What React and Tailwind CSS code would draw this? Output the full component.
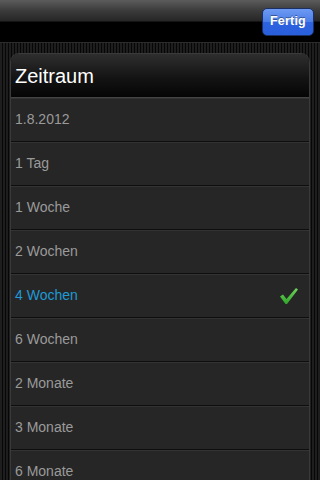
import React from "react";

const rows = [
  { label: "1.8.2012" },
  { label: "1 Tag" },
  { label: "1 Woche" },
  { label: "2 Wochen" },
  { label: "4 Wochen", selected: true },
  { label: "6 Wochen" },
  { label: "2 Monate" },
  { label: "3 Monate" },
  { label: "6 Monate" },
];

function Check() {
  return (
    <svg width="20" height="18" viewBox="0 0 20 18">
      <defs>
        <linearGradient id="cg" x1="0" y1="0" x2="0" y2="1">
          <stop offset="0" stopColor="#6fd35a" />
          <stop offset="1" stopColor="#2fa52a" />
        </linearGradient>
      </defs>
      <path
        d="M1 9.5 L4 7.5 L7.5 12 L17 1 L19 2.5 L8 17 L6.5 17 Z"
        fill="url(#cg)"
      />
    </svg>
  );
}

export default function App() {
  return (
    <div
      className="w-[320px] h-[480px] overflow-hidden flex flex-col bg-[repeating-linear-gradient(90deg,#1e1e1e_0px,#1e1e1e_2px,#070707_2px,#070707_3px)]"
      style={{ fontFamily: '"Liberation Sans", Arial, sans-serif' }}
    >
      <div className="h-[43px] shrink-0 flex items-center justify-end pr-[6px] bg-[linear-gradient(180deg,#5c5c5c_0px,#3a3a3a_11px,#262626_21px,#000_22px,#000_43px)] border-b border-[#2c2c2c]">
        <div className="mt-[1px] w-[52px] h-[28px] rounded-[5px] border border-[#1a2f66] bg-[linear-gradient(180deg,#6e9af2_0%,#4a7de8_50%,#2d63e0_51%,#2a5fdc_100%)] flex items-center justify-center text-white text-[12.5px] font-bold tracking-[0.2px] [text-shadow:0_-1px_0_rgba(0,0,0,0.4)]">
          Fertig
        </div>
      </div>
      <div className="px-[10px] pt-[10px]">
        <div className="rounded-t-[9px] border border-[#3a3a3a] overflow-hidden">
          <div className="h-[44px] flex items-center pl-[4px] bg-[linear-gradient(180deg,#2e2e2e_0%,#141414_55%,#050505_100%)] text-white text-[20px] border-b border-[#444]">
            Zeitraum
          </div>
          {rows.map((r, i) => (
            <div
              key={i}
              className="h-[44px] flex items-center justify-between pl-[4px] pr-[10px] bg-[#262626] border-b border-[#0e0e0e] shadow-[inset_0_1px_0_#333]"
            >
              <span
                className={
                  r.selected
                    ? "text-[14px] text-[#1e9ad6]"
                    : "text-[14px] text-[#9a9a9a]"
                }
              >
                {r.label}
              </span>
              {r.selected && <Check />}
            </div>
          ))}
        </div>
      </div>
    </div>
  );
}
